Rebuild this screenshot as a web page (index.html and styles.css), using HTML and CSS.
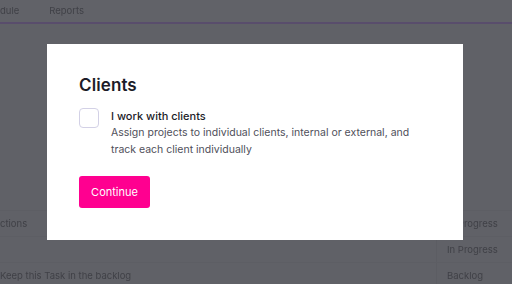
FILE: index.html
```html
<!DOCTYPE html>
<html>
<head>
<meta charset="utf-8">
<link rel="stylesheet" href="styles.css">
</head>
<body>
<div class="app">
  <div class="nav">
    <span class="nav-item">dule</span>
    <span class="nav-item">Reports</span>
  </div>
  <div class="spacer"></div>
  <div class="table">
    <div class="row"><div class="cell name">ctions</div><div class="cell status">In Progress</div></div>
    <div class="row"><div class="cell name"></div><div class="cell status">In Progress</div></div>
    <div class="row"><div class="cell name">Keep this Task in the backlog</div><div class="cell status">Backlog</div></div>
  </div>
</div>
<div class="overlay">
  <div class="modal">
    <h2 class="title">Clients</h2>
    <div class="option">
      <span class="checkbox"></span>
      <div class="option-text">
        <div class="option-label">I work with clients</div>
        <div class="option-desc">Assign projects to individual clients, internal or external, and track each client individually</div>
      </div>
    </div>
    <button class="btn">Continue</button>
  </div>
</div>
</body>
</html>
```

FILE: styles.css
```css
html, body {
  margin: 0;
  padding: 0;
  width: 512px;
  height: 284px;
  overflow: hidden;
  background: #606167;
  font-family: Inter, "Liberation Sans", sans-serif;
}
.app {
  width: 512px;
  height: 284px;
  filter: blur(0.6px);
  color: #404147;
  font-size: 9.5px;
}
.nav {
  height: 22px;
  display: flex;
  align-items: center;
  gap: 30px;
  border-bottom: 2px solid #594d6c;
  background: #616268;
}
.nav-item { line-height: 22px; }
.spacer { height: 186px; }
.table { display: flex; flex-direction: column; }
.row {
  height: 26px;
  display: flex;
  border-top: 1px solid #5d5e64;
  box-sizing: border-box;
}
.cell { display: flex; align-items: center; }
.name { width: 436px; }
.status {
  flex: 1;
  border-left: 1px solid #5c5d63;
  padding-left: 10px;
}
.overlay {
  position: fixed;
  inset: 0;
  display: flex;
  align-items: center;
  justify-content: center;
}
.modal {
  width: 416px;
  height: 196px;
  box-sizing: border-box;
  background: #ffffff;
  padding: 30px 32px 32px 32px;
  display: flex;
  flex-direction: column;
  align-items: flex-start;
  margin-left: -2px;
}
.title {
  margin: 0;
  font-size: 17px;
  line-height: 22px;
  font-weight: 600;
  color: #1c1c28;
  letter-spacing: 0.1px;
}
.option {
  display: flex;
  gap: 12px;
  margin-top: 12px;
}
.checkbox {
  width: 20px;
  height: 20px;
  box-sizing: border-box;
  border: 1.5px solid #d3d1e6;
  border-radius: 4px;
  flex: none;
}
.option-label {
  font-size: 11px;
  line-height: 16px;
  font-weight: 500;
  color: #1c1c28;
}
.option-desc {
  font-size: 10.5px;
  line-height: 17px;
  color: #4f4f5a;
  width: 305px;
}
.btn {
  margin-top: 18px;
  height: 32px;
  width: 71px;
  border: none;
  border-radius: 3px;
  background: #ff0090;
  color: #ffffff;
  font-family: Inter, "Liberation Sans", sans-serif;
  font-size: 11px;
  padding: 0;
}
```
